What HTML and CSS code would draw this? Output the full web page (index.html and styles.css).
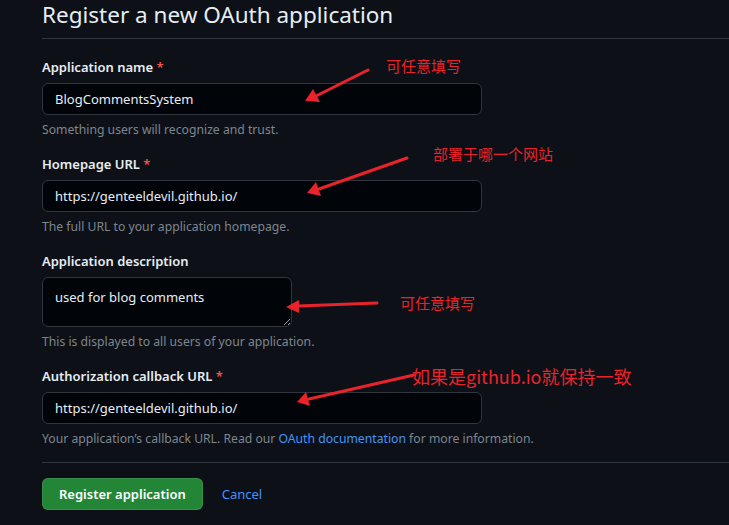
FILE: index.html
```html
<!DOCTYPE html>
<html lang="en">
<head>
<meta charset="utf-8">
<title>Register a new OAuth application</title>
<link rel="stylesheet" href="styles.css">
</head>
<body>
<div class="page">
  <div class="subhead">
    <h1 class="subhead-title">Register a new OAuth application</h1>
  </div>
  <form class="form">
    <div class="group">
      <label class="label">Application name <span class="req">*</span></label>
      <input class="field" type="text" value="BlogCommentsSystem">
      <p class="note">Something users will recognize and trust.</p>
    </div>
    <div class="group">
      <label class="label">Homepage URL <span class="req">*</span></label>
      <input class="field" type="text" value="https://genteeldevil.github.io/">
      <p class="note">The full URL to your application homepage.</p>
    </div>
    <div class="group">
      <label class="label">Application description</label>
      <textarea class="field area">used for blog comments</textarea>
      <p class="note">This is displayed to all users of your application.</p>
    </div>
    <div class="group">
      <label class="label">Authorization callback URL <span class="req">*</span></label>
      <input class="field" type="text" value="https://genteeldevil.github.io/">
      <p class="note">Your application’s callback URL. Read our <a class="link" href="#">OAuth documentation</a> for more information.</p>
    </div>
    <div class="actions">
      <button class="btn-primary" type="button">Register application</button>
      <a class="link cancel" href="#">Cancel</a>
    </div>
  </form>

  <div class="annot a1">可任意填写</div>
  <div class="annot a2">部署于哪一个网站</div>
  <div class="annot a3">可任意填写</div>
  <div class="annot a4">如果是github.io就保持一致</div>

  <svg class="arrows" width="729" height="525" viewBox="0 0 729 525">
    <g stroke="#e8232b" stroke-width="3" stroke-linecap="round" fill="#e8232b">
      <line x1="368" y1="70" x2="316" y2="96"/>
      <polygon points="305,101 313,89 320,102" stroke="none"/>
      <line x1="407" y1="158" x2="319" y2="189"/>
      <polygon points="307,193 316,182 321,196" stroke="none"/>
      <line x1="377" y1="303" x2="298" y2="306"/>
      <polygon points="286,307 299,300 299,313" stroke="none"/>
      <line x1="414" y1="375" x2="309" y2="399"/>
      <polygon points="297,402 306,392 310,406" stroke="none"/>
    </g>
  </svg>
</div>
</body>
</html>
```
FILE: styles.css
```css
* { box-sizing: border-box; }
html, body {
  margin: 0;
  padding: 0;
  background: #0d1117;
  color-scheme: dark;
}
body {
  font-family: "Noto Sans", "Segoe UI", "Liberation Sans", sans-serif;
  color: #e6edf3;
  font-size: 13px;
}
.page {
  position: relative;
  width: 729px;
  height: 525px;
  overflow: hidden;
  padding-left: 42px;
}
.subhead {
  border-bottom: 1px solid #30363d;
  padding-bottom: 8px;
  margin-bottom: 18px;
}
.subhead-title {
  margin: 0;
  font-size: 22.5px;
  font-weight: 400;
  line-height: 30px;
}
.form { margin: 0; }
.group { margin-bottom: 15px; }
.label {
  display: block;
  font-size: 13px;
  font-weight: 600;
  line-height: 20px;
  margin-bottom: 6px;
}
.req { color: #f85149; }
.field {
  display: block;
  width: 440px;
  height: 32px;
  padding: 0 12px;
  border: 1px solid #30363d;
  border-radius: 6px;
  background: #010409;
  color: #e6edf3;
  font-family: inherit;
  font-size: 13px;
  outline: none;
}
.area {
  width: 250px;
  height: 50px;
  padding: 9px 12px 7px;
  line-height: 20px;
  resize: both;
}
.note {
  margin: 6px 0 0;
  font-size: 12.2px;
  line-height: 18px;
  color: #7d8590;
}
.link { color: #4493f8; text-decoration: none; }
.actions {
  border-top: 1px solid #30363d;
  margin-top: -1px;
  padding-top: 15px;
  display: flex;
  align-items: center;
  gap: 19px;
}
.btn-primary {
  height: 32px;
  padding: 0 16px;
  background: #238636;
  color: #ffffff;
  border: 1px solid rgba(240, 246, 252, 0.1);
  border-radius: 6px;
  font-family: inherit;
  font-size: 13px;
  font-weight: 600;
}
.cancel { font-size: 13px; }
.annot {
  position: absolute;
  font-family: "Noto Sans CJK SC", "Noto Sans", sans-serif;
  color: #e8232b;
  font-size: 15px;
  line-height: 20px;
  white-space: nowrap;
}
.a1 { left: 386px; top: 56px; }
.a2 { left: 433px; top: 144px; }
.a3 { left: 400px; top: 293px; }
.a4 { left: 412px; top: 364px; font-size: 18px; line-height: 24px; }
.arrows {
  position: absolute;
  left: 0;
  top: 0;
  pointer-events: none;
}
```
